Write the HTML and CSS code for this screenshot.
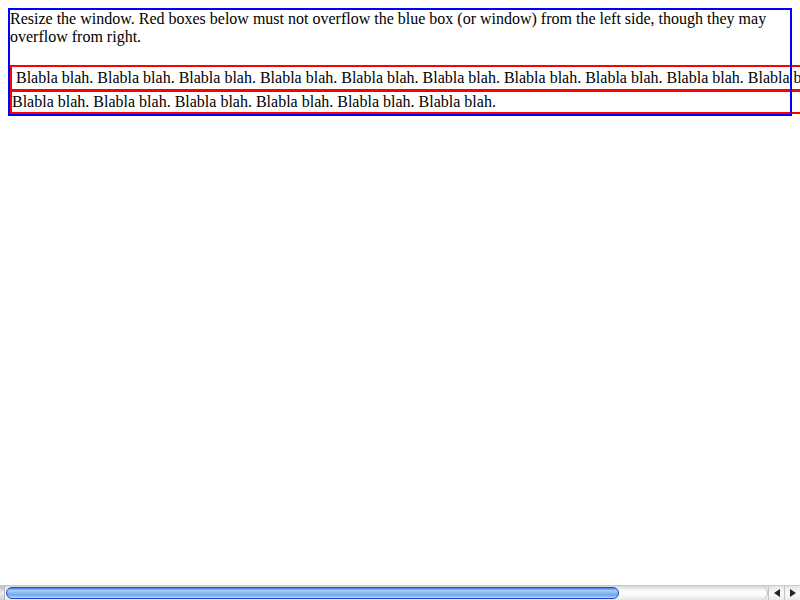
FILE: index.html
```html
<!DOCTYPE html>
<html>
<head>
<meta charset="utf-8">
<title>Overflow test</title>
<link rel="stylesheet" href="styles.css">
</head>
<body>
<div class="page">
  <div class="blue">
    <p class="intro">Resize the window. Red boxes below must not overflow the blue box (or window) from the left side, though they may overflow from right.</p>
    <div class="red first">Blabla blah. Blabla blah. Blabla blah. Blabla blah. Blabla blah. Blabla blah. Blabla blah. Blabla blah. Blabla blah. Blabla blah. Blabla blah. Blabla blah.</div>
    <div class="red second">Blabla blah. Blabla blah. Blabla blah. Blabla blah. Blabla blah. Blabla blah.</div>
  </div>
</div>
<div class="hscroll">
  <div class="cap"></div>
  <div class="track">
    <div class="thumb"></div>
  </div>
  <div class="btn"><span class="tri left"></span></div>
  <div class="btn"><span class="tri right"></span></div>
</div>
</body>
</html>
```
FILE: styles.css
```css
html {
  overflow: hidden;
  background: #fff;
}
body {
  margin: 0;
  width: 800px;
  font-family: "Liberation Serif", "Times New Roman", serif;
  font-size: 16px;
  line-height: 18px;
  color: #000;
}
.page {
  width: 800px;
  box-sizing: border-box;
  padding: 8px;
  overflow: hidden;
}
.blue {
  position: relative;
  border: 2px solid #0000ff;
}
.blue::after {
  content: "";
  position: absolute;
  top: -2px;
  bottom: -2px;
  right: -2px;
  width: 2px;
  background: #0000ff;
  z-index: 2;
}
.intro {
  margin: 0 0 19px 0;
}
.red {
  border: 2px solid #ff0000;
  margin-right: -200px;
  white-space: nowrap;
}
.first {
  padding: 2px 4px;
}
.second {
  margin-top: -1px;
  padding: 1px 0;
}
.hscroll {
  position: fixed;
  left: 0;
  bottom: 0;
  width: 800px;
  height: 15px;
  display: flex;
  background: linear-gradient(#d8d8d8, #f6f6f6 30%, #ffffff 55%, #e6e6e6);
  border-top: 1px solid #c8c8c8;
  box-sizing: border-box;
  z-index: 3;
}
.cap {
  width: 4px;
  background: linear-gradient(#c0c0c0, #eeeeee 50%, #cfcfcf);
  border-right: 1px solid #b5b5b5;
}
.track {
  flex: 1;
  display: flex;
  align-items: center;
  padding-left: 1px;
  border-right: 1px solid #b8b8b8;
  border-radius: 0 7px 7px 0;
}
.thumb {
  width: 613px;
  height: 12px;
  box-sizing: border-box;
  border-radius: 6px;
  border: 1px solid #1a4fc4;
  background: linear-gradient(#3f7fe6, #a7cbf8 25%, #8cb8f2 50%, #6ea6f0 70%, #b9dafc);
}
.btn {
  width: 15px;
  display: flex;
  align-items: center;
  justify-content: center;
  border-left: 1px solid #c4c4c4;
  background: linear-gradient(#e4e4e4, #fafafa 50%, #e8e8e8);
}
.tri {
  width: 0;
  height: 0;
  border-top: 4px solid transparent;
  border-bottom: 4px solid transparent;
}
.tri.left {
  border-right: 6px solid #222;
}
.tri.right {
  border-left: 6px solid #222;
}
```
